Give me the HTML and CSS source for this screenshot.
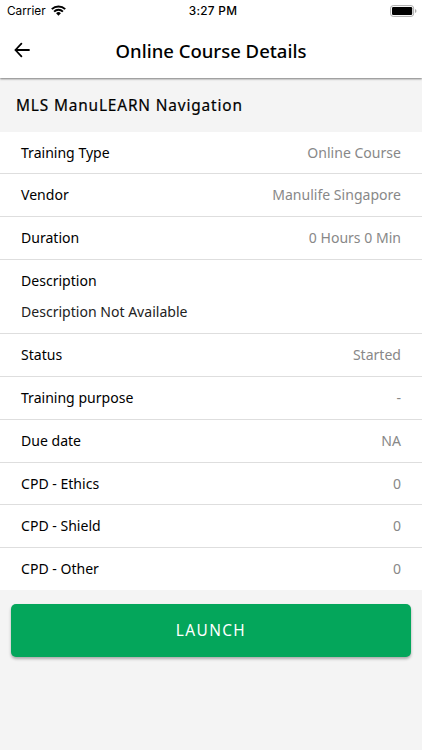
FILE: index.html
```html
<!DOCTYPE html>
<html lang="en">
<head>
    <meta charset="UTF-8">
    <meta name="viewport" content="width=device-width, initial-scale=1.0">
    <title>Online Course Details</title>
    <link rel="stylesheet" href="styles.css">
</head>
<body>
    <header class="header">
        <div class="status-bar">
            <div class="carrier">
                <span>Carrier</span>
                <svg class="wifi" viewBox="0 0 15 11" width="15" height="11">
                    <path d="M0.8 4.1 A9.6 9.6 0 0 1 14.2 4.1" fill="none" stroke="#000" stroke-width="2"/>
                    <path d="M3.1 6.6 A6.2 6.2 0 0 1 11.9 6.6" fill="none" stroke="#000" stroke-width="1.9"/>
                    <path d="M5.1 8.3 A3.4 3.4 0 0 1 9.9 8.3 L7.5 10.8 Z"/>
                </svg>
            </div>
            <div class="time">3:27 PM</div>
            <div class="battery">
                <svg viewBox="0 0 27 12" width="27" height="12">
                    <rect x="0.6" y="0.6" width="23" height="10.8" rx="2.6" fill="none" stroke="#aaa"/>
                    <rect x="2" y="2" width="20.2" height="8" rx="1.2"/>
                    <path d="M25 4 Q26.5 4.6 26.5 6 Q26.5 7.4 25 8 Z" fill="#aaa"/>
                </svg>
            </div>
        </div>
        <div class="toolbar">
            <svg class="back" viewBox="0 0 16 16" width="16" height="16">
                <path d="M7.4 1.6 L1.4 8 L7.4 14.4 M1.4 8 H15" fill="none" stroke="#000" stroke-width="1.8" stroke-linecap="round" stroke-linejoin="round"/>
            </svg>
            <h1>Online Course Details</h1>
        </div>
    </header>

    <main>
        <h2>MLS ManuLEARN Navigation</h2>
        <div class="list">
            <div class="item"><span>Training Type</span><span class="note">Online Course</span></div>
            <div class="item"><span>Vendor</span><span class="note">Manulife Singapore</span></div>
            <div class="item"><span>Duration</span><span class="note">0 Hours 0 Min</span></div>
            <div class="item description">
                <span>Description</span>
                <p>Description Not Available</p>
            </div>
            <div class="item"><span>Status</span><span class="note">Started</span></div>
            <div class="item"><span>Training purpose</span><span class="note">-</span></div>
            <div class="item"><span>Due date</span><span class="note">NA</span></div>
            <div class="item"><span>CPD - Ethics</span><span class="note">0</span></div>
            <div class="item"><span>CPD - Shield</span><span class="note">0</span></div>
            <div class="item"><span>CPD - Other</span><span class="note">0</span></div>
        </div>
        <button class="launch">LAUNCH</button>
    </main>
</body>
</html>
```
FILE: styles.css
```css
* {
    box-sizing: border-box;
}
body {
    margin: 0;
    min-height: 750px;
    background: #f4f4f4;
    color: #000;
    font-family: "Noto Sans", sans-serif;
    font-size: 14.05px;
}
.header {
    position: relative;
    height: 78px;
    background: #fff;
    box-shadow: 0 1px 2px rgba(0,0,0,0.5);
}
.status-bar {
    display: grid;
    grid-template-columns: 1fr auto 1fr;
    align-items: center;
    height: 21px;
    padding: 0 5px 0 7px;
    font-family: Inter, sans-serif;
    font-size: 11.8px;
}
.carrier {
    display: flex;
    align-items: center;
    gap: 5px;
}
.time {
    padding-left: 2px;
    font-weight: 500;
    letter-spacing: 0.3px;
}
.battery {
    display: flex;
    justify-content: flex-end;
}
.toolbar {
    display: grid;
    grid-template-columns: 40px 1fr 40px;
    align-items: center;
    height: 58px;
}
.back {
    margin-left: 14px;
}
h1 {
    margin: 0;
    font-size: 18.5px;
    font-weight: 500;
    text-align: center;
}
h2 {
    margin: 0;
    padding: 0 16px;
    height: 53.5px;
    line-height: 55px;
    font-size: 15.4px;
    font-weight: 400;
    letter-spacing: 0.85px;
    -webkit-text-stroke: 0.2px #000;
}
.list {
    background: #fff;
}
.item {
    display: flex;
    justify-content: space-between;
    height: 42.75px;
    padding: 0 21px;
    line-height: 41px;
    border-bottom: 1px solid #dedede;
}
.item:last-child {
    height: 42px;
    border-bottom: none;
}
.note {
    color: #888;
}
.description {
    display: block;
    height: 74.5px;
}
.description p {
    margin: 0;
    line-height: 22px;
    color: #222;
}
.launch {
    display: block;
    width: 400px;
    height: 53px;
    margin: 14px 11px;
    border: none;
    border-radius: 5px;
    background: #04a65b;
    color: #fff;
    font-family: inherit;
    font-size: 15.4px;
    letter-spacing: 1.4px;
    box-shadow: 0 2px 3px rgba(0,0,0,0.3);
}
```
